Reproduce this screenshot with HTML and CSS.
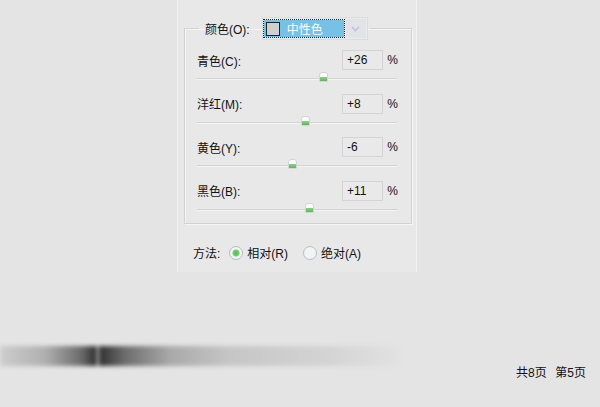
FILE: index.html
```html
<!DOCTYPE html>
<html lang="zh-CN">
<head>
    <meta charset="UTF-8">
    <title>可选颜色</title>
    <link rel="stylesheet" href="styles.css">
</head>
<body>
<div class="dialog">
    <fieldset class="group">
        <legend class="legend">
            <span class="legend-label">颜色(O):</span>
            <span class="select">
                <span class="select-value"><i class="swatch"></i>中性色</span>
                <span class="select-arrow">
                    <svg width="9" height="6" viewBox="0 0 9 6"><path d="M1 1 L4.5 4.5 L8 1" fill="none" stroke="#b9c6d8" stroke-width="1.6"/></svg>
                </span>
            </span>
        </legend>

        <div class="row">
            <span class="label">青色(C):</span>
            <span class="num">+26</span>
            <span class="pct">%</span>
        </div>
        <div class="slider"><i class="thumb" style="left:63%"></i></div>

        <div class="row">
            <span class="label">洋红(M):</span>
            <span class="num">+8</span>
            <span class="pct">%</span>
        </div>
        <div class="slider"><i class="thumb" style="left:54%"></i></div>

        <div class="row">
            <span class="label">黄色(Y):</span>
            <span class="num">-6</span>
            <span class="pct">%</span>
        </div>
        <div class="slider"><i class="thumb" style="left:47.5%"></i></div>

        <div class="row">
            <span class="label">黑色(B):</span>
            <span class="num">+11</span>
            <span class="pct">%</span>
        </div>
        <div class="slider"><i class="thumb" style="left:56%"></i></div>
    </fieldset>

    <div class="method">
        <span class="method-label">方法:</span>
        <span class="radio checked"></span>
        <span class="radio-text">相对(R)</span>
        <span class="radio"></span>
        <span class="radio-text">绝对(A)</span>
    </div>
</div>

<div class="strip"></div>
<div class="pager">共8页&nbsp;&nbsp;第5页</div>
</body>
</html>
```

FILE: styles.css
```css
body,html{
    margin:0;
    width:100%;
    height:100%;
    overflow:hidden;
}
body {
    background:#e4e4e4;
    font-family:"Liberation Sans","Noto Sans CJK SC",sans-serif;
    font-size:12px;
    color:#111;
}
.dialog {
    width:228px;
    margin-left:177px;
    padding:17px 4px 9px 6px;
    background:#e8e8e8;
    border-left:1px solid #f1f1f1;
    border-right:1px solid #f1f1f1;
}
.group {
    margin:0;
    padding:0 13px 6px 12px;
    border:1px solid #d2d2d2;
    box-shadow:inset 1px 1px 0 #f5f5f5, 1px 1px 0 #f5f5f5;
}
.legend {
    margin-left:2px;
    padding:0 2px 0 6px;
    display:flex;
    align-items:center;
    height:23px;
}
.legend-label {
    margin-right:12px;
}
.select {
    display:flex;
    align-items:center;
    padding:1px;
    border:1px solid #dcdcdc;
    background:#ebebeb;
}
.select-value {
    width:76px;
    height:17px;
    display:flex;
    align-items:center;
    background:#77c0e6;
    color:#fff;
    outline:1px dotted #222;
    outline-offset:0;
    padding:0 2px;
}
.swatch {
    width:12px;
    height:12px;
    margin-right:7px;
    background:#cfcfcf;
    border:1px solid #222;
}
.select-arrow {
    width:20px;
    height:19px;
    margin-left:2px;
    display:flex;
    align-items:center;
    justify-content:center;
    background:#e2e3e8;
}
.row {
    display:flex;
    align-items:center;
    height:20px;
    margin-top:7.5px;
}
.row:first-of-type {
    margin-top:10px;
}
.label {
    flex-grow:1;
}
.num {
    width:35px;
    height:18px;
    line-height:18px;
    padding-left:4px;
    border:1px solid #d4d4d4;
    background:#e9e9e9;
}
.pct {
    width:15px;
    text-align:right;
}
.slider {
    position:relative;
    height:16px;
    margin-right:1px;
}
.slider::before {
    content:"";
    position:absolute;
    left:0;
    right:0;
    top:8px;
    height:1px;
    background:#d3d3d3;
    box-shadow:0 1px 0 #f4f4f4;
}
.thumb {
    position:absolute;
    top:2px;
    width:7px;
    height:8px;
    margin-left:-4px;
    border:1px solid #d0d6d0;
    border-radius:3px 3px 1px 1px;
    background:linear-gradient(#fafafa 55%, #86cf84 55%, #5fb55d);
}
.method {
    display:flex;
    align-items:center;
    height:20px;
    margin-top:19px;
    padding-left:9px;
}
.method-label {
    margin-right:9px;
}
.radio {
    width:12px;
    height:12px;
    border:1px solid #b5bcc4;
    border-radius:50%;
    background:#f3f3f3;
    margin-right:4px;
}
.radio.checked {
    background:radial-gradient(circle, #4cc04a 0, #6fd06c 3px, #f3f3f3 4px);
}
.radio-text {
    margin-right:15px;
}
.strip {
    margin-top:74px;
    width:400px;
    height:20px;
    background:linear-gradient(to right, #cdcdcd 0, #b0b0b0 45px, #6a6a6a 82px, #2b2b2b 97px, #fff 97px, #fff 98px, #303030 99px, #6d6d6d 125px, #a9a9a9 170px, #c6c6c6 230px, #d4d4d4 330px, #e2e2e2 400px);
    filter:blur(2px);
}
.pager {
    text-align:right;
    padding-right:14px;
    line-height:14px;
    word-spacing:1px;
}
```
